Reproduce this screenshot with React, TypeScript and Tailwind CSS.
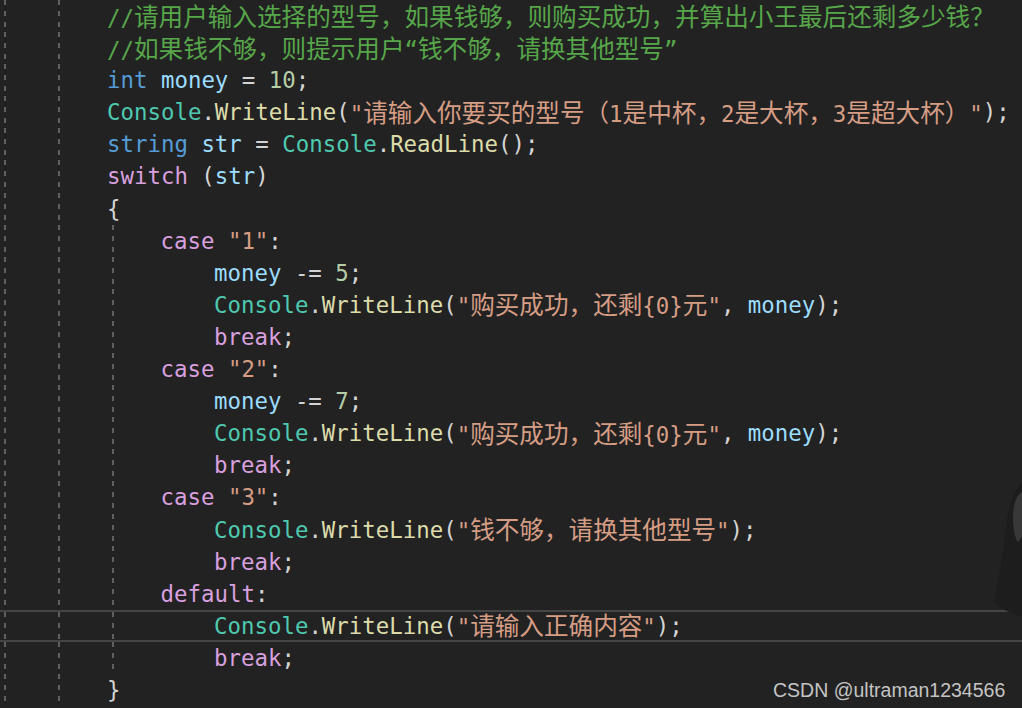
import React from "react";

type Tok = [string, string];

const C = {
  cmt: "text-[#57a64a]",
  kw: "text-[#569cd6]",
  ctl: "text-[#d8a0df]",
  v: "text-[#9cdcfe]",
  cls: "text-[#4ec9b0]",
  fn: "text-[#dcdcaa]",
  s: "text-[#d69d85]",
  n: "text-[#b5cea8]",
  p: "text-[#d4d4d4]",
};

const dash = "w-[2px] h-full bg-[repeating-linear-gradient(to_bottom,#5f5f5f_0_5px,transparent_5px_11px)]";

const writeLine = (msg: string, extra: Tok[] = []): Tok[] => [
  ["Console", C.cls],
  [".", C.p],
  ["WriteLine", C.fn],
  ["(", C.p],
  [`"${msg}"`, C.s],
  ...extra,
  [");", C.p],
];

const lines: { indent: number; toks: Tok[]; guide?: boolean; current?: boolean }[] = [
  { indent: 0, toks: [["//请用户输入选择的型号，如果钱够，则购买成功，并算出小王最后还剩多少钱？", C.cmt]] },
  { indent: 0, toks: [["//如果钱不够，则提示用户“钱不够，请换其他型号”", C.cmt]] },
  { indent: 0, toks: [["int", C.kw], [" ", C.p], ["money", C.v], [" = ", C.p], ["10", C.n], [";", C.p]] },
  { indent: 0, toks: writeLine("请输入你要买的型号（1是中杯，2是大杯，3是超大杯）") },
  {
    indent: 0,
    toks: [["string", C.kw], [" ", C.p], ["str", C.v], [" = ", C.p], ["Console", C.cls], [".", C.p], ["ReadLine", C.fn], ["();", C.p]],
  },
  { indent: 0, toks: [["switch", C.ctl], [" (", C.p], ["str", C.v], [")", C.p]] },
  { indent: 0, toks: [["{", C.p]] },
  { indent: 4, guide: true, toks: [["case", C.ctl], [" ", C.p], ['"1"', C.s], [":", C.p]] },
  { indent: 8, guide: true, toks: [["money", C.v], [" -= ", C.p], ["5", C.n], [";", C.p]] },
  { indent: 8, guide: true, toks: writeLine("购买成功，还剩{0}元", [[", ", C.p], ["money", C.v]]) },
  { indent: 8, guide: true, toks: [["break", C.ctl], [";", C.p]] },
  { indent: 4, guide: true, toks: [["case", C.ctl], [" ", C.p], ['"2"', C.s], [":", C.p]] },
  { indent: 8, guide: true, toks: [["money", C.v], [" -= ", C.p], ["7", C.n], [";", C.p]] },
  { indent: 8, guide: true, toks: writeLine("购买成功，还剩{0}元", [[", ", C.p], ["money", C.v]]) },
  { indent: 8, guide: true, toks: [["break", C.ctl], [";", C.p]] },
  { indent: 4, guide: true, toks: [["case", C.ctl], [" ", C.p], ['"3"', C.s], [":", C.p]] },
  { indent: 8, guide: true, toks: writeLine("钱不够，请换其他型号") },
  { indent: 8, guide: true, toks: [["break", C.ctl], [";", C.p]] },
  { indent: 4, guide: true, toks: [["default", C.ctl], [":", C.p]] },
  { indent: 8, guide: true, current: true, toks: writeLine("请输入正确内容") },
  { indent: 8, guide: true, toks: [["break", C.ctl], [";", C.p]] },
  { indent: 0, toks: [["}", C.p]] },
];

// CJK runs get the wider CJK font size, the rest stays monospace
function Text({ text }: { text: string }) {
  const parts = text.split(/([\u3000-\u303f\u4e00-\u9fff\uff00-\uffef]+)/);
  return (
    <>
      {parts.map((part, i) =>
        i % 2 === 1 ? (
          <span key={i} className="font-['Noto_Sans_CJK_SC',sans-serif] text-[24.6px]">
            {part}
          </span>
        ) : (
          <span key={i}>{part}</span>
        ),
      )}
    </>
  );
}

export default function App() {
  return (
    <div className="relative h-[708px] w-[1022px] overflow-hidden bg-[#222222] font-['DejaVu_Sans_Mono','Noto_Sans_CJK_SC',monospace] text-[22.4px] leading-[32.1px]">
      <div className="flex flex-col">
        {lines.map((line, i) => (
          <div
            key={i}
            className={`flex h-[32.1px] items-stretch ${line.current ? "border-y-2 border-[#454545]" : ""}`}
          >
            <div className="flex w-[107px] shrink-0">
              <div className={`ml-[4px] ${dash}`} />
              <div className={`ml-[52px] ${dash}`} />
            </div>
            {line.indent > 0 && (
              <div className={`flex shrink-0 ${line.indent === 4 ? "w-[53.5px]" : "w-[107px]"}`}>
                {line.guide && <div className={`ml-[5px] ${dash}`} />}
              </div>
            )}
            <div className="flex items-center whitespace-pre">
              {line.toks.map(([t, cls], j) => (
                <span key={j} className={cls}>
                  <Text text={t} />
                </span>
              ))}
            </div>
          </div>
        ))}
      </div>

      <svg className="absolute right-0 top-[480px] h-[136px] w-[30px]" viewBox="0 0 30 136">
        <path d="M30 2 C22 10 15 30 13 55 C11 80 6 100 2 122 C10 130 20 134 30 136 Z" fill="#1d1d1d" />
        <path d="M30 12 C24 15 21 26 21 38 C21 50 23 58 26 62 C28 60 30 57 30 55 Z" fill="#383838" />
      </svg>

      <div className="absolute left-[773px] top-[677px] font-['Liberation_Sans',Arial,sans-serif] text-[19.5px] leading-[26px] text-[#c4c4c4]">
        CSDN @ultraman1234566
      </div>
    </div>
  );
}
